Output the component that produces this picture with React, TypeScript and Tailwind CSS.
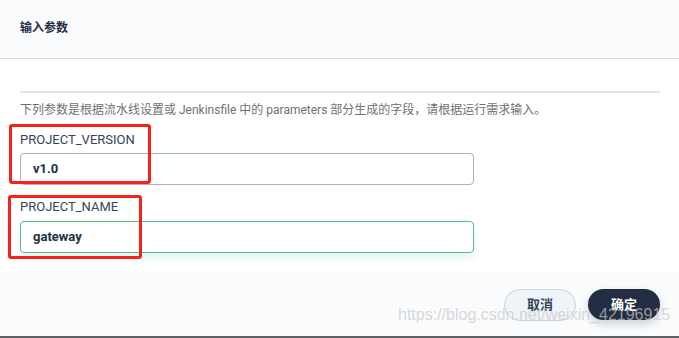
import React from "react";

const font = { fontFamily: 'Roboto, "Noto Sans CJK SC", "Liberation Sans", sans-serif' };

export default function App() {
  return (
    <div className="relative w-[679px] h-[338px] bg-white overflow-hidden" style={font}>
      <div className="h-[59px] bg-[#f9fbfd] border-b border-[#d8dee5] px-5 flex items-start pt-[18px]">
        <span className="text-[12px] leading-[20px] font-bold text-[#242e42]">输入参数</span>
      </div>
      <div className="px-5">
        <div className="mt-[32px] h-[2px] bg-[#e3e3e3] w-[640px]" />
        <div className="mt-[7px] text-[12px] leading-5 text-[#707070] whitespace-nowrap">
          下列参数是根据流水线设置或 Jenkinsfile 中的 parameters 部分生成的字段，请根据运行需求输入。
        </div>
        <div className="mt-[12px] text-[13px] leading-4 text-[#36435c]">PROJECT_VERSION</div>
        <div className="mt-[5px] w-[454px] h-[32px] rounded-[4px] border border-[#a9b2be] flex items-center pl-3 text-[13px] font-bold text-[#242e42]">
          v1.0
        </div>
        <div className="mt-[14px] text-[13px] leading-4 text-[#36435c]">PROJECT_NAME</div>
        <div className="mt-[6px] w-[454px] h-[32px] rounded-[4px] border border-[#55bc8a] flex items-center pl-3 text-[13px] font-bold text-[#242e42] shadow-[0_4px_8px_rgba(85,188,138,0.18)]">
          gateway
        </div>
      </div>
      <div className="mt-[20px] h-[65px] bg-[#f9fbfd] border-b-2 border-[#5c6166] flex justify-end items-start pt-[16px] pr-[19px] gap-3">
        <button className="w-[72px] h-[32px] rounded-full bg-[#eff4f9] border border-[#ccd3db] text-[13px] font-bold text-[#36435c]">
          取消
        </button>
        <button className="w-[72px] h-[31px] rounded-full bg-[#242e42] text-[13px] font-bold text-white shadow-[0_4px_8px_rgba(36,46,66,0.2)]">
          确定
        </button>
      </div>

      <div className="absolute left-[9px] top-[124px] w-[142px] h-[60px] border-[3px] border-[#f5221b] rounded-[3px]" />
      <div className="absolute left-[8px] top-[195px] w-[134px] h-[64px] border-[3px] border-[#f5221b] rounded-[3px]" />

      <div
        className="absolute left-[398px] top-[305px] text-[16px] leading-5 text-[rgba(200,200,200,0.7)] whitespace-nowrap"
        style={{ fontFamily: '"Liberation Sans", Arial, sans-serif' }}
      >
        https://blog.csdn.net/weixin_42196915
      </div>
    </div>
  );
}
